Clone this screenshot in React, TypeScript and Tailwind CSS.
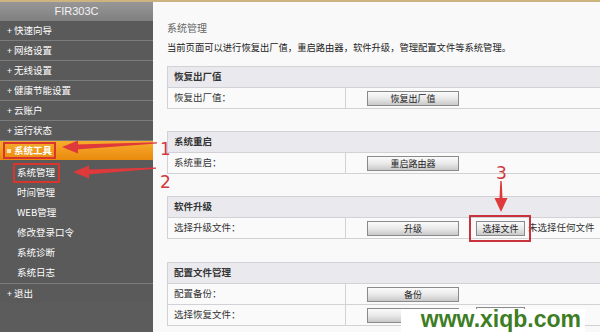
import type { ReactNode } from "react";

const cjk = "font-['Noto_Sans_CJK_SC',sans-serif]";

const topMenu = ["快速向导", "网络设置", "无线设置", "健康节能设置", "云账户", "运行状态"];
const subMenu = ["系统管理", "时间管理", "WEB管理", "修改登录口令", "系统诊断", "系统日志"];

function Btn({ children, w = "w-[92px]" }: { children?: ReactNode; w?: string }) {
  return (
    <button
      type="button"
      className={`${w} h-[15px] border border-[#8a8a8a] bg-linear-to-b from-[#fbfbfb] via-[#e9e9e9] to-[#c9c9c9] text-[9px] leading-none text-[#222] ${cjk}`}
    >
      {children}
    </button>
  );
}

interface Row {
  label: string;
  button?: string;
  file?: boolean;
  mark?: boolean;
  hidden?: boolean;
}

function Section({ title, rows, className = "" }: { title: string; rows: Row[]; className?: string }) {
  return (
    <div className={`w-[440px] ${className}`}>
      <div className="flex h-[22px] items-center border border-r-0 border-[#d2d2d6] bg-[#e9e9ee] pl-[6px] text-[9.5px] font-bold leading-none text-[#333]">
        {title}
      </div>
      {rows.map((r) => (
        <div
          key={r.label}
          className="flex h-[21px] items-stretch border-x border-b border-r-0 border-[#d2d2d6] bg-[#fafafa] text-[9.5px] leading-none text-[#333]"
        >
          <div className="flex w-[178px] items-center border-r border-[#d2d2d6] pl-[6px]">{r.label}</div>
          <div className="flex items-center pl-[21px]">
            <Btn>{r.button}</Btn>
            {r.file && (
              <div className="ml-[17px] flex items-center">
                <div className="relative">
                  <Btn w="w-[49px]">{r.hidden ? null : "选择文件"}</Btn>
                  {r.mark && (
                    <span className="pointer-events-none absolute -top-[6px] -bottom-[6px] -left-[7px] -right-[6px] border-2 border-[#c9343c]" />
                  )}
                </div>
                {!r.hidden && <span className="ml-[3px] text-[9.5px] text-[#333]">未选择任何文件</span>}
              </div>
            )}
          </div>
        </div>
      ))}
    </div>
  );
}

export default function App() {
  return (
    <div className={`relative h-[332px] w-[600px] overflow-hidden bg-[#f9f9f9] ${cjk}`}>
      <div className="h-[2px] bg-[#cdb37e]" />
      <div className="flex h-[330px]">
        {/* 左侧菜单 */}
        <div className="flex w-[153px] shrink-0 flex-col bg-[#5a5a5a] text-[9.5px] leading-none text-white">
          <div className="flex h-[19px] items-center justify-center bg-linear-to-b from-[#979797] to-[#808080] font-['Liberation_Sans',sans-serif] text-[11px] text-[#f4f4f4]">
            FIR303C
          </div>
          {topMenu.map((m) => (
            <div key={m} className="flex h-[20px] items-center border-b border-[#7c7c7c] pl-[7px]">
              <span className="mr-[2px] w-[5px] text-[9px]">+</span>
              {m}
            </div>
          ))}
          <div className="flex h-[19px] items-center bg-linear-to-b from-[#f8ac2c] to-[#e98a0a] pl-[7px]">
            <span className="relative flex items-center font-bold">
              <span className="mr-[3px] inline-block h-[4px] w-[4px] bg-[#fbe3b8]" />
              系统工具
              <span className="absolute -top-[4px] -bottom-[4px] -left-[4px] -right-[4px] border-2 border-[#d8352e]" />
            </span>
          </div>
          <div className="border-b border-[#7c7c7c] pt-[3px]">
            {subMenu.map((s, i) => (
              <div key={s} className="flex h-[20px] items-center pl-[17px]">
                <span className="relative">
                  {s}
                  {i === 0 && (
                    <span className="absolute -top-[5px] -bottom-[5px] -left-[4px] -right-[5px] border-2 border-[#d8352e]" />
                  )}
                </span>
              </div>
            ))}
          </div>
          <div className="flex h-[19px] items-center pl-[7px]">
            <span className="mr-[2px] w-[5px] text-[9px]">+</span>
            退出
          </div>
          <div className="flex-1 bg-[#5c5c5c]" />
        </div>

        {/* 内容 */}
        <div className="min-w-0 flex-1 pl-[14px] pt-[20px]">
          <div className="h-[12px] text-[10px] leading-[12px] text-[#666]">系统管理</div>
          <div className="mt-[7px] h-[12px] whitespace-nowrap text-[9.3px] leading-[12px] text-[#222]">
            当前页面可以进行恢复出厂值，重启路由器，软件升级，管理配置文件等系统管理。
          </div>
          <Section className="mt-[13px]" title="恢复出厂值" rows={[{ label: "恢复出厂值：", button: "恢复出厂值" }]} />
          <Section className="mt-[22px]" title="系统重启" rows={[{ label: "系统重启：", button: "重启路由器" }]} />
          <Section
            className="mt-[22px]"
            title="软件升级"
            rows={[{ label: "选择升级文件：", button: "升级", file: true, mark: true }]}
          />
          <Section
            className="mt-[23px]"
            title="配置文件管理"
            rows={[
              { label: "配置备份：", button: "备份" },
              { label: "选择恢复文件：", file: true, hidden: true },
            ]}
          />
        </div>
      </div>

      {/* 标注箭头 */}
      <svg className="pointer-events-none absolute left-0 top-0" width="600" height="332" viewBox="0 0 600 332">
        <g fill="#e0393c">
          <polygon points="76,144.5 157,142.2 157,143.6 76,149.5" />
          <polygon points="62,147 78,140.5 78,153.5" />
          <polygon points="87,169.5 156,167.4 156,168.8 87,174.5" />
          <polygon points="73,172 89,165.5 89,178.5" />
          <polygon points="500.3,181 501.7,181 502.6,200 499.4,200" />
          <polygon points="501,212 494.5,198 507.5,198" />
        </g>
        <g fill="#d0393e" fontFamily="'DejaVu Sans', sans-serif" fontSize="17">
          <text x="160" y="155">1</text>
          <text x="160" y="188">2</text>
          <text x="496" y="179">3</text>
        </g>
      </svg>

      {/* 水印 */}
      <div className="absolute left-[401px] top-[309px] flex h-[23px] w-[184px] items-end justify-end bg-white pb-[1px] pr-[4px] font-['Liberation_Sans',sans-serif] text-[23px] font-bold leading-none text-[#3d7d23]">
        www.xiqb.com
      </div>
    </div>
  );
}
